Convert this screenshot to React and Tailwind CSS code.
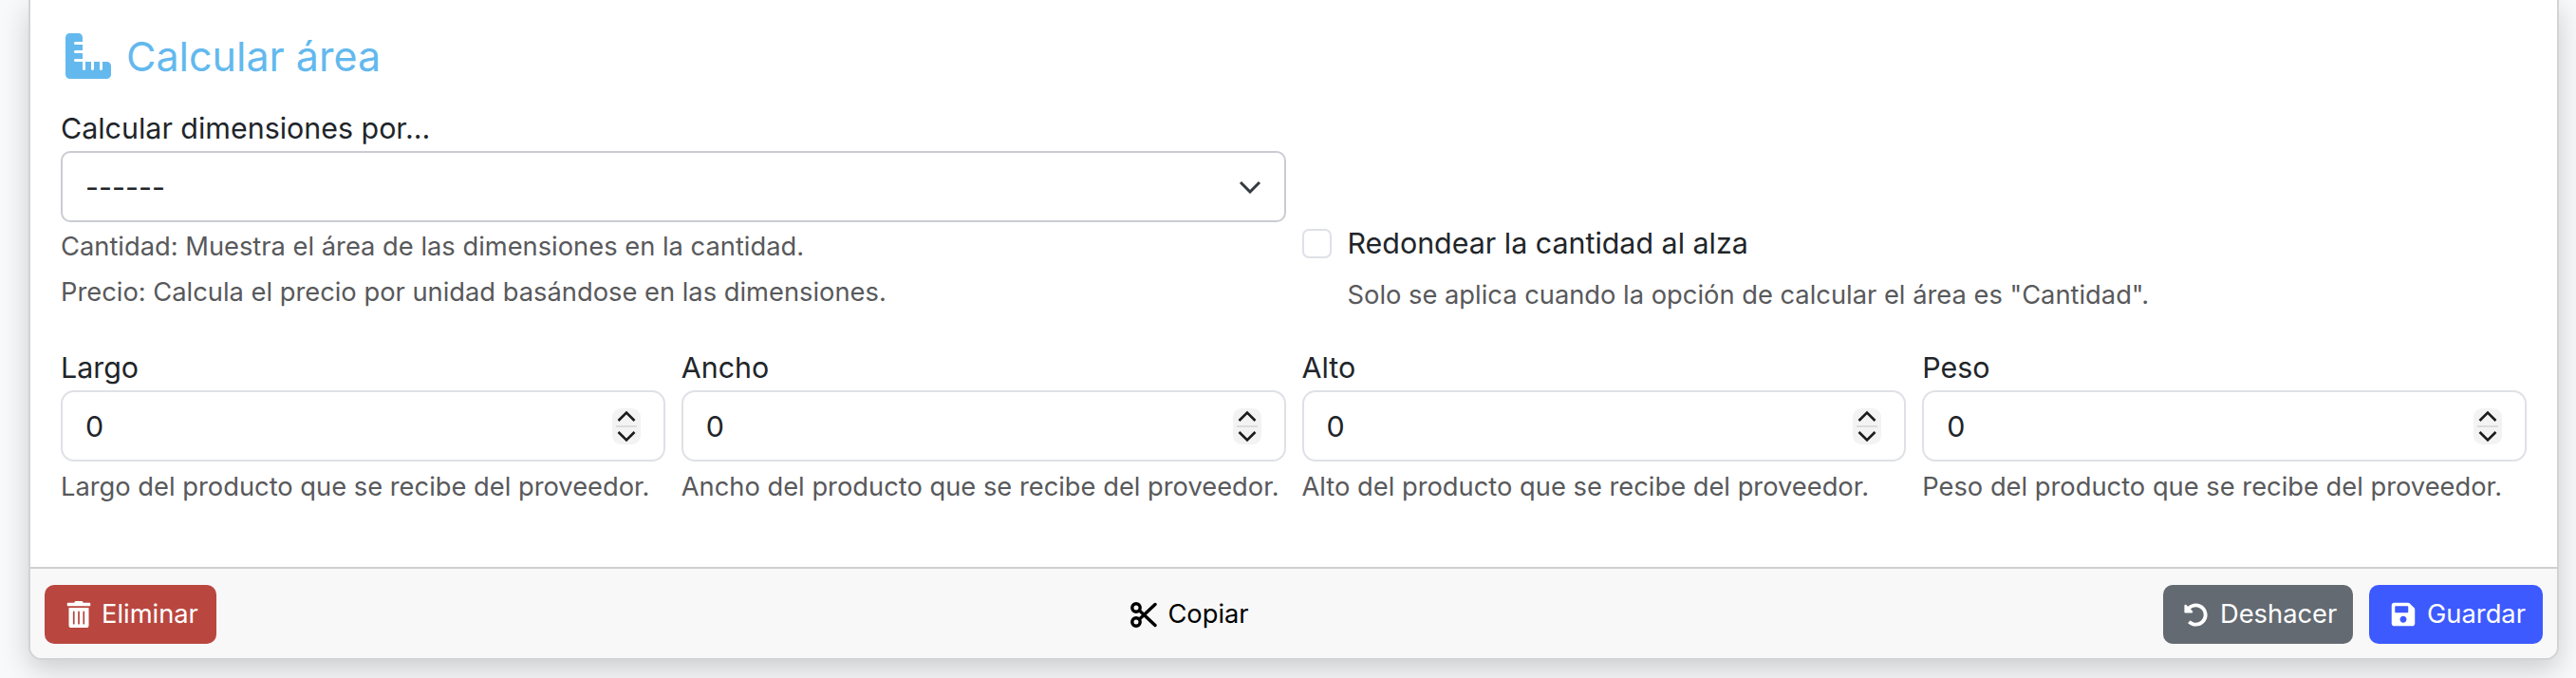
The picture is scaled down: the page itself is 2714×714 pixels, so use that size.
import React from 'react';
import { FaTrashAlt, FaUndoAlt, FaSave } from 'react-icons/fa';
import { FaRulerCombined } from 'react-icons/fa6';

const campos = [
    { label: 'Largo', ayuda: 'Largo del producto que se recibe del proveedor.' },
    { label: 'Ancho', ayuda: 'Ancho del producto que se recibe del proveedor.' },
    { label: 'Alto', ayuda: 'Alto del producto que se recibe del proveedor.' },
    { label: 'Peso', ayuda: 'Peso del producto que se recibe del proveedor.' },
];

// macOS style number spinner
const Spinner = () => (
    <svg width="30" height="38" viewBox="0 0 30 38" className="shrink-0">
        <rect width="30" height="38" rx="9" fill="#f3f3f3" />
        <path d="M6.5 13 L15 4.5 L23.5 13" fill="none" stroke="#1c1c1e" strokeWidth="2.6" />
        <path d="M4 19 H26" stroke="#dcdcdc" strokeWidth="2" />
        <path d="M6.5 25 L15 33.5 L23.5 25" fill="none" stroke="#1c1c1e" strokeWidth="2.6" />
    </svg>
);

const Tijeras = () => (
    <svg width="28" height="27" viewBox="0 0 28 27" fill="none" stroke="currentColor" strokeWidth="3.4" strokeLinecap="round" className="shrink-0">
        <circle cx="6" cy="6" r="4.2" />
        <circle cx="6" cy="21" r="4.2" />
        <path d="M9.5 9 L26 24.5" />
        <path d="M9.5 18 L26 2.5" />
    </svg>
);

const App = () => {
    return (
        <div className="w-[2714px] h-[714px] overflow-hidden bg-[#f8f9fa] font-['Inter',sans-serif] text-[30.4px] leading-[46px] text-[#212529]">
            <div className="ml-[30px] w-[2666px] h-[695px] flex flex-col bg-white border-x-2 border-b-2 border-[#d2d3d5] rounded-b-[14px] shadow-[0_10px_30px_rgba(0,0,0,0.18)]">
                <div className="flex-1 px-[32px] pt-[29px]">
                    <h3 className="flex items-center gap-[16px] h-[60px] text-[#63b9ee] text-[43px] leading-[60px]">
                        <FaRulerCombined size={48} className="ml-[5px]" />
                        Calcular área
                    </h3>

                    <div className="grid grid-cols-2 gap-x-[17px] mt-[23px]">
                        <div>
                            <label className="block h-[47px]">Calcular dimensiones por...</label>
                            <div className="flex items-center justify-between h-[75px] px-[24px] border-2 border-[#c9ccd1] rounded-[10px]">
                                <span>------</span>
                                <svg width="24" height="14" viewBox="0 0 24 14">
                                    <path d="M2 2 L12 12 L22 2" fill="none" stroke="#343a40" strokeWidth="3" />
                                </svg>
                            </div>
                            <p className="mt-[8px] text-[#58595b] text-[27.3px] leading-[36px]">Cantidad: Muestra el área de las dimensiones en la cantidad.</p>
                            <p className="mt-[12px] text-[#58595b] text-[27.3px] leading-[36px]">Precio: Calcula el precio por unidad basándose en las dimensiones.</p>
                        </div>
                        <div className="pt-[123px]">
                            <div className="flex items-center gap-[17px] h-[42px]">
                                <span className="w-[31px] h-[31px] bg-white border-2 border-[#dfe1e6] rounded-[7px]"></span>
                                <label>Redondear la cantidad al alza</label>
                            </div>
                            <p className="mt-[16px] ml-[48px] text-[#58595b] text-[27.3px] leading-[36px]">Solo se aplica cuando la opción de calcular el área es "Cantidad".</p>
                        </div>
                    </div>

                    <div className="grid grid-cols-4 gap-x-[17px] mt-[35px]">
                        {campos.map((c) => (
                            <div key={c.label}>
                                <label className="block h-[47px]">{c.label}</label>
                                <div className="flex items-center justify-between h-[75px] pl-[24px] pr-[24px] border-2 border-[#dfe1e6] rounded-[14px]">
                                    <span>0</span>
                                    <Spinner />
                                </div>
                                <p className="mt-[9px] text-[#58595b] text-[27.3px] leading-[36px] whitespace-nowrap">{c.ayuda}</p>
                            </div>
                        ))}
                    </div>
                </div>

                <div className="flex items-center justify-between h-[96px] px-[15px] pt-[2px] bg-[#f8f8f8] border-t-2 border-[#cfcfd1] rounded-b-[12px] text-[27.3px] leading-[36px]">
                    <button className="flex items-center gap-[10px] h-[62px] w-[181px] pl-[22px] bg-[#b9473f] text-white rounded-[10px]">
                        <FaTrashAlt size={28} />
                        Eliminar
                    </button>
                    <button className="flex items-center gap-[11px] h-[62px] text-black">
                        <Tijeras />
                        Copiar
                    </button>
                    <div className="flex items-center gap-[17px]">
                        <button className="flex items-center gap-[13px] h-[62px] w-[200px] pl-[22px] bg-[#636a72] text-white rounded-[10px]">
                            <FaUndoAlt size={25} />
                            Deshacer
                        </button>
                        <button className="flex items-center gap-[11px] h-[62px] w-[183px] pl-[22px] bg-[#3d5afe] text-white rounded-[10px]">
                            <FaSave size={28} />
                            Guardar
                        </button>
                    </div>
                </div>
            </div>
        </div>
    );
};

export default App;
